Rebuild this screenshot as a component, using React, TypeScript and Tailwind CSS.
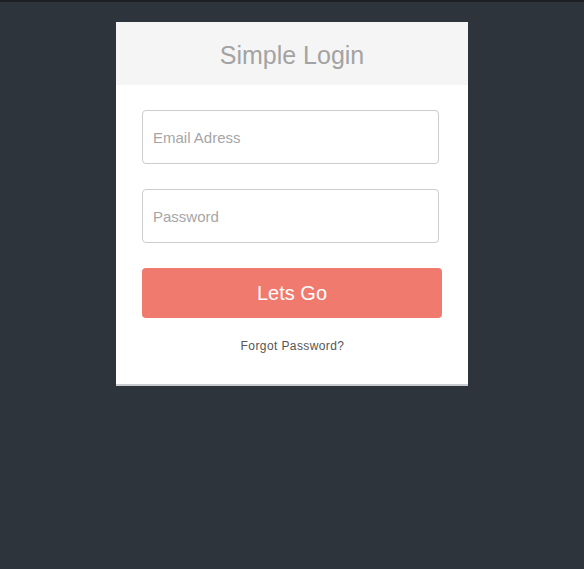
export default function App() {
  return (
    <div
      className="min-h-[569px] bg-[#2e343b] border-t-2 border-[#1d2125] pt-[20px]"
      style={{ fontFamily: '"Liberation Sans", Arial, sans-serif' }}
    >
      {/* Login card */}
      <div className="ml-[116px] w-[352px] bg-white border-b-2 border-[#c9cdd1]">
        <div className="h-[63px] bg-[#f5f5f5] flex items-center justify-center">
          <h1 className="text-[25px] text-[#a3a3a3] leading-none pt-[4px]">Simple Login</h1>
        </div>
        <form className="pl-[26px] pr-[25px] pt-[25px] pb-[32px]" onSubmit={(e) => e.preventDefault()}>
          <input
            type="email"
            placeholder="Email Adress"
            className="block w-[297px] h-[54px] px-[10px] border border-[#cccccc] rounded-[4px] text-[15px] text-[#555] placeholder:text-[#a6a6a6] outline-none"
          />
          <input
            type="password"
            placeholder="Password"
            className="block mt-[25px] w-[297px] h-[54px] px-[10px] border border-[#cccccc] rounded-[4px] text-[15px] text-[#555] placeholder:text-[#a6a6a6] outline-none"
          />
          <button
            type="submit"
            className="block mt-[25px] w-[300px] h-[50px] rounded-[4px] bg-[#f07a6e] text-white text-[20px]"
          >
            Lets Go
          </button>
          <p className="mt-[22px] text-center text-[12px] tracking-[0.4px] text-[#555] leading-none">
            Forgot Password?
          </p>
        </form>
      </div>
    </div>
  );
}
